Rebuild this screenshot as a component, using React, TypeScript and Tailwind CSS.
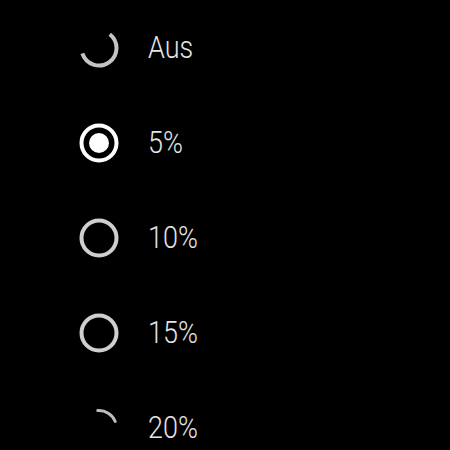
import React from 'react';

type Item = { label: string; icon: 'top' | 'selected' | 'empty' | 'bottom' };

const items: Item[] = [
  { label: 'Aus', icon: 'top' },
  { label: '5%', icon: 'selected' },
  { label: '10%', icon: 'empty' },
  { label: '15%', icon: 'empty' },
  { label: '20%', icon: 'bottom' },
];

function arc(r: number, a0: number, a1: number) {
  const rad = (d: number) => (d * Math.PI) / 180;
  const x0 = 20 + r * Math.cos(rad(a0));
  const y0 = 20 + r * Math.sin(rad(a0));
  const x1 = 20 + r * Math.cos(rad(a1));
  const y1 = 20 + r * Math.sin(rad(a1));
  const large = a1 - a0 > 180 ? 1 : 0;
  return `M${x0} ${y0} A${r} ${r} 0 ${large} 1 ${x1} ${y1}`;
}

function RadioIcon({ kind }: { kind: Item['icon'] }) {
  return (
    <svg width="40" height="40" viewBox="0 0 40 40" className="shrink-0">
      {kind === 'selected' && (
        <>
          <circle cx="20" cy="20" r="17.5" fill="none" stroke="#ffffff" strokeWidth="4" />
          <circle cx="20" cy="20" r="10" fill="#ffffff" />
        </>
      )}
      {kind === 'empty' && (
        <circle cx="20" cy="20" r="17.5" fill="none" stroke="#cfcfcf" strokeWidth="4" />
      )}
      {kind === 'top' && (
        <path d={arc(17.5, -52, 162)} fill="none" stroke="#c4c4c4" strokeWidth="4" />
      )}
      {kind === 'bottom' && (
        <path d={arc(17.5, -94, -22)} fill="none" stroke="#bdbdbd" strokeWidth="3" strokeLinecap="round" />
      )}
    </svg>
  );
}

export default function App() {
  return (
    <div className="w-[450px] h-[450px] bg-black overflow-hidden" style={{ fontFamily: 'Roboto, "Liberation Sans", sans-serif' }}>
      <div className="flex flex-col">
        {items.map((item) => (
          <div key={item.label} className="h-[95px] flex items-center pl-[79px] gap-[29px] shrink-0">
            <RadioIcon kind={item.icon} />
            <span className="text-[31px] font-light text-[#e4e4e4] leading-none scale-x-[0.87] origin-left">{item.label}</span>
          </div>
        ))}
      </div>
    </div>
  );
}
